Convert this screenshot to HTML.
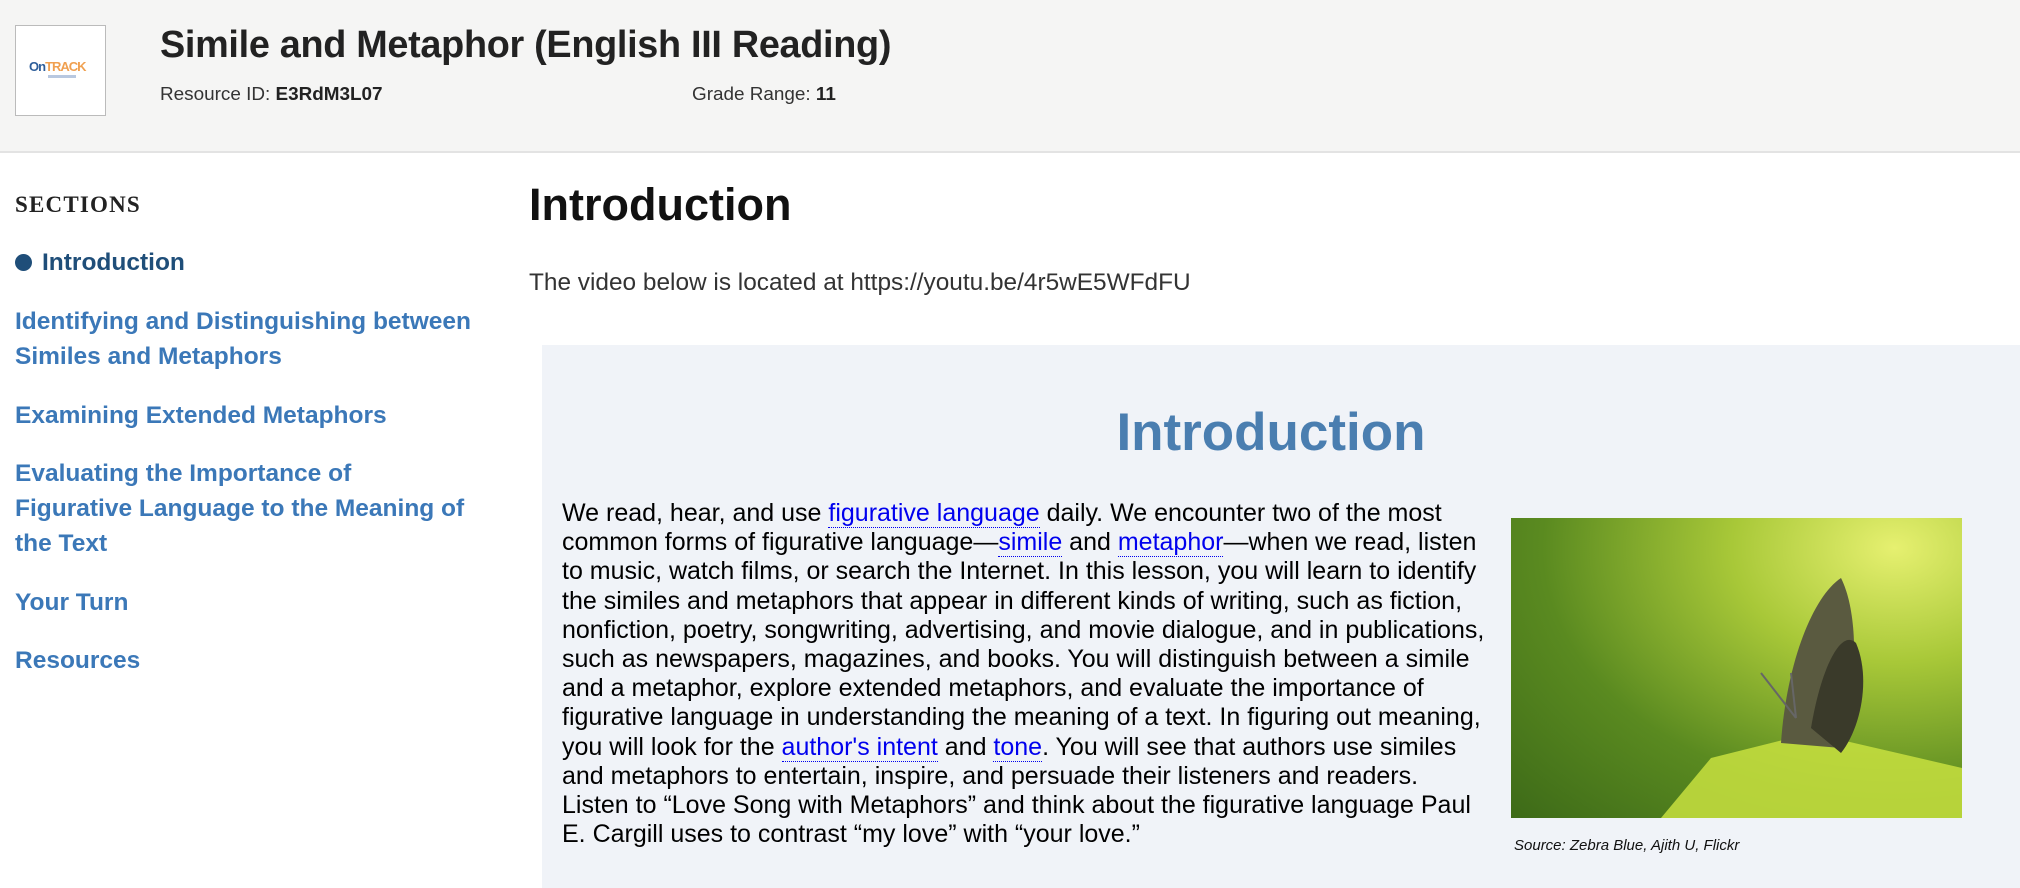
<!DOCTYPE html>
<html><head><meta charset="utf-8"><style>
body{margin:0;width:2020px;height:888px;overflow:hidden;background:#fff;font-family:"Liberation Sans",sans-serif;position:relative}
.hdr{position:absolute;left:0;top:0;width:2020px;height:151px;background:#f5f5f4;border-bottom:2px solid #e3e3e3}
.logo{position:absolute;left:15px;top:25px;width:89px;height:89px;background:#fff;border:1px solid #bbb}
.logo .t{position:absolute;left:13px;top:33px;font-size:13px;font-weight:bold;letter-spacing:-1px;color:#2e5e9a}
.logo .t span{color:#f0a050}
.logo .s{position:absolute;left:32px;top:49px;width:28px;height:3px;background:#b8c8e0}
.title{position:absolute;left:160px;top:24px;font-size:37.8px;font-weight:bold;color:#222;letter-spacing:-0.3px}
.meta{position:absolute;top:84px;font-size:18.9px;color:#333}
.meta b{color:#222}
.sec{position:absolute;left:15px;top:192px;font-family:"Liberation Serif",serif;font-weight:bold;font-size:23px;letter-spacing:1.2px;color:#222}
.nav{position:absolute;left:15px;font-size:24.5px;font-weight:bold;color:#3b78b8;line-height:35px}
.nav.cur{color:#1f4e79;left:15px}
.dot{display:inline-block;width:17px;height:17px;border-radius:50%;background:#1f4e79;margin-right:10px;vertical-align:-1px}
h1{position:absolute;left:529px;top:179px;margin:0;font-size:45px;color:#111}
.vid{position:absolute;left:529px;top:269px;font-size:24.4px;color:#333}
.panel{position:absolute;left:542px;top:345px;width:1478px;height:543px;background:#f0f3f8}
.ptitle{position:absolute;left:0;width:1458px;text-align:center;top:57px;font-size:53px;font-weight:bold;color:#4a7eb0}
.para{position:absolute;left:20px;top:154px;white-space:nowrap;font-size:25px;line-height:29.2px;color:#000}
.para a{color:#0000ee;text-decoration:none;border-bottom:1px dotted #0000ee}
.img{position:absolute;left:969px;top:173px;width:451px;height:300px;background:radial-gradient(ellipse at 85% 10%,#e6f070 0%,#a8c838 30%,#5a8a20 65%,#3d6a18 100%);overflow:hidden}
.caption{position:absolute;left:972px;top:492px;font-size:15px;font-style:italic;color:#111}
</style></head><body>
<div class="hdr">
<div class="logo"><div class="t">On<span>TRACK</span></div><div class="s"></div></div>
<div class="title">Simile and Metaphor (English III Reading)</div>
<div class="meta" style="left:160px">Resource ID: <b>E3RdM3L07</b></div>
<div class="meta" style="left:692px">Grade Range: <b>11</b></div>
</div>
<div class="sec">SECTIONS</div>
<div class="nav cur" style="top:245px"><span class="dot"></span>Introduction</div>
<div class="nav" style="top:304px">Identifying and Distinguishing between<br>Similes and Metaphors</div>
<div class="nav" style="top:398px">Examining Extended Metaphors</div>
<div class="nav" style="top:456px">Evaluating the Importance of<br>Figurative Language to the Meaning of<br>the Text</div>
<div class="nav" style="top:585px">Your Turn</div>
<div class="nav" style="top:643px">Resources</div>
<h1>Introduction</h1>
<div class="vid">The video below is located at https://youtu.be/4r5wE5WFdFU</div>
<div class="panel">
<div class="ptitle">Introduction</div>
<div class="para">We read, hear, and use <a>figurative language</a> daily. We encounter two of the most<br>common forms of figurative language—<a>simile</a> and <a>metaphor</a>—when we read, listen<br>to music, watch films, or search the Internet. In this lesson, you will learn to identify<br>the similes and metaphors that appear in different kinds of writing, such as fiction,<br>nonfiction, poetry, songwriting, advertising, and movie dialogue, and in publications,<br>such as newspapers, magazines, and books. You will distinguish between a simile<br>and a metaphor, explore extended metaphors, and evaluate the importance of<br>figurative language in understanding the meaning of a text. In figuring out meaning,<br>you will look for the <a>author's intent</a> and <a>tone</a>. You will see that authors use similes<br>and metaphors to entertain, inspire, and persuade their listeners and readers.<br>Listen to “Love Song with Metaphors” and think about the figurative language Paul<br>E. Cargill uses to contrast “my love” with “your love.”</div>
<div class="img"><svg width="451" height="300" viewBox="0 0 451 300">
<path d="M150 300 L200 240 L300 215 L451 250 L451 300 Z" fill="#c8e040" opacity="0.85"/>
<path d="M270 225 C275 150 300 80 330 60 C350 100 345 180 330 230 Z" fill="#5a5a40"/>
<path d="M300 210 C310 150 330 110 345 125 C360 160 350 210 330 235 Z" fill="#3a3a2a"/>
<path d="M285 200 L280 155 M285 200 L250 155" stroke="#666" stroke-width="2"/>
</svg></div>
<div class="caption">Source: Zebra Blue, Ajith U, Flickr</div>
</div>
</body></html>
